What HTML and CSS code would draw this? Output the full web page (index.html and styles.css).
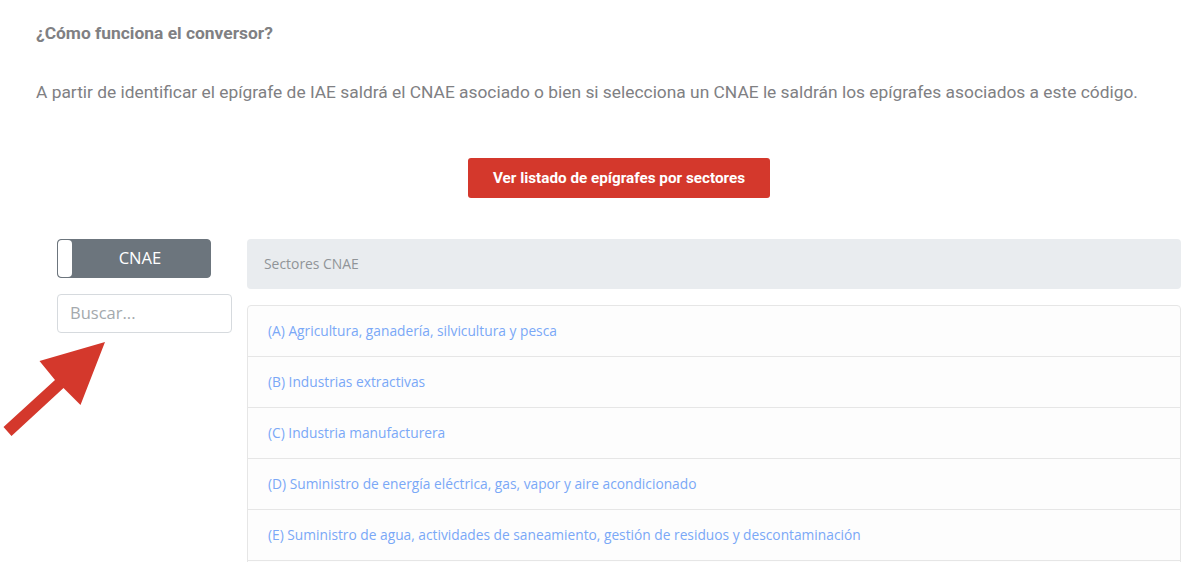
FILE: index.html
```html
<!DOCTYPE html>
<html lang="es">
<head>
<meta charset="utf-8">
<title>Conversor CNAE</title>
<link rel="stylesheet" href="styles.css">
</head>
<body>
<main class="page">
  <section class="intro">
    <p class="question">¿Cómo funciona el conversor?</p>
    <p class="answer">A partir de identificar el epígrafe de IAE saldrá el CNAE asociado o bien si selecciona un CNAE le saldrán los epígrafes asociados a este código.</p>
  </section>
  <div class="cta"><a class="cta-btn" href="#">Ver listado de epígrafes por sectores</a></div>
  <section class="converter">
    <aside class="side">
      <div class="toggle"><span class="knob"></span><span class="toggle-label">CNAE</span></div>
      <input class="search" type="text" placeholder="Buscar...">
    </aside>
    <div class="results">
      <div class="sector-head">Sectores CNAE</div>
      <ul class="list">
        <li><a href="#">(A) Agricultura, ganadería, silvicultura y pesca</a></li>
        <li><a href="#">(B) Industrias extractivas</a></li>
        <li><a href="#">(C) Industria manufacturera</a></li>
        <li><a href="#">(D) Suministro de energía eléctrica, gas, vapor y aire acondicionado</a></li>
        <li><a href="#">(E) Suministro de agua, actividades de saneamiento, gestión de residuos y descontaminación</a></li>
        <li></li>
      </ul>
    </div>
  </section>
  <svg class="arrow" viewBox="0 0 110 100" width="110" height="100" aria-hidden="true">
    <polygon points="105,0 39.5,19 55,38 3.5,85 11.5,94 63.5,46 80.5,63" fill="#d4382c"/>
  </svg>
</main>
</body>
</html>
```
FILE: styles.css
```css
* { box-sizing: border-box; }
html, body { margin: 0; padding: 0; background: #fff; }
.page {
  position: relative;
  width: 1198px;
  height: 584px;
  overflow: hidden;
  padding: 24px 17px 0 36px;
  font-family: Roboto, "Liberation Sans", sans-serif;
  color: #808083;
}
.intro p { margin: 0; }
.question {
  font-size: 17.4px;
  line-height: 19px;
  font-weight: 700;
  color: #808083;
}
.answer {
  margin-top: 39px !important;
  font-size: 17.38px;
  line-height: 20px;
  white-space: nowrap;
}
.cta {
  display: flex;
  justify-content: center;
  margin-top: 56px;
  padding-left: 21px;
}
.cta-btn {
  display: block;
  width: 302px;
  height: 40px;
  background: #d4382c;
  border-radius: 3px;
  color: #fff;
  font-size: 15.25px;
  font-weight: 700;
  line-height: 40px;
  text-align: center;
  text-decoration: none;
}
.converter {
  display: flex;
  gap: 15px;
  margin-top: 41px;
  padding-left: 21px;
  font-family: "Open Sans", "Liberation Sans", sans-serif;
}
.side {
  display: flex;
  flex-direction: column;
  width: 175px;
  gap: 16px;
}
.toggle {
  display: flex;
  align-items: center;
  width: 154px;
  height: 39px;
  background: #6c757d;
  border: 1px solid #6c757d;
  border-radius: 4px;
}
.knob {
  width: 14px;
  height: 37px;
  background: #fff;
  border-radius: 4px;
}
.toggle-label {
  flex: 1;
  text-align: center;
  color: #fff;
  font-size: 16.6px;
  line-height: 35px;
  padding: 0 26px 2px 24px;
}
.search {
  width: 175px;
  height: 39px;
  padding: 0 12px 2px;
  border: 1px solid #d6dade;
  border-radius: 4px;
  background: #fff;
  font-family: inherit;
  font-size: 16.5px;
  color: #495057;
  outline: none;
}
.search::placeholder { color: #a4a9ad; opacity: 1; }
.results {
  display: flex;
  flex-direction: column;
  width: 934px;
  height: 323px;
  overflow: hidden;
}
.sector-head {
  height: 50px;
  flex: none;
  padding-left: 17px;
  background: #e9ecef;
  border-radius: 4px;
  font-size: 13.9px;
  line-height: 50px;
  color: #909498;
}
.list {
  list-style: none;
  margin: 16px 0 0;
  padding: 0;
  background: #fdfdfd;
  border: 1px solid #e6e6e6;
  border-radius: 4px 4px 0 0;
  flex: none;
}
.list li {
  height: 51px;
  padding-left: 20px;
  border-bottom: 1px solid #e6e6e6;
  font-size: 13.75px;
  line-height: 50px;
}
.list a { color: #7aa8f7; text-decoration: none; }
.arrow {
  position: absolute;
  left: 0;
  top: 342px;
}
```
